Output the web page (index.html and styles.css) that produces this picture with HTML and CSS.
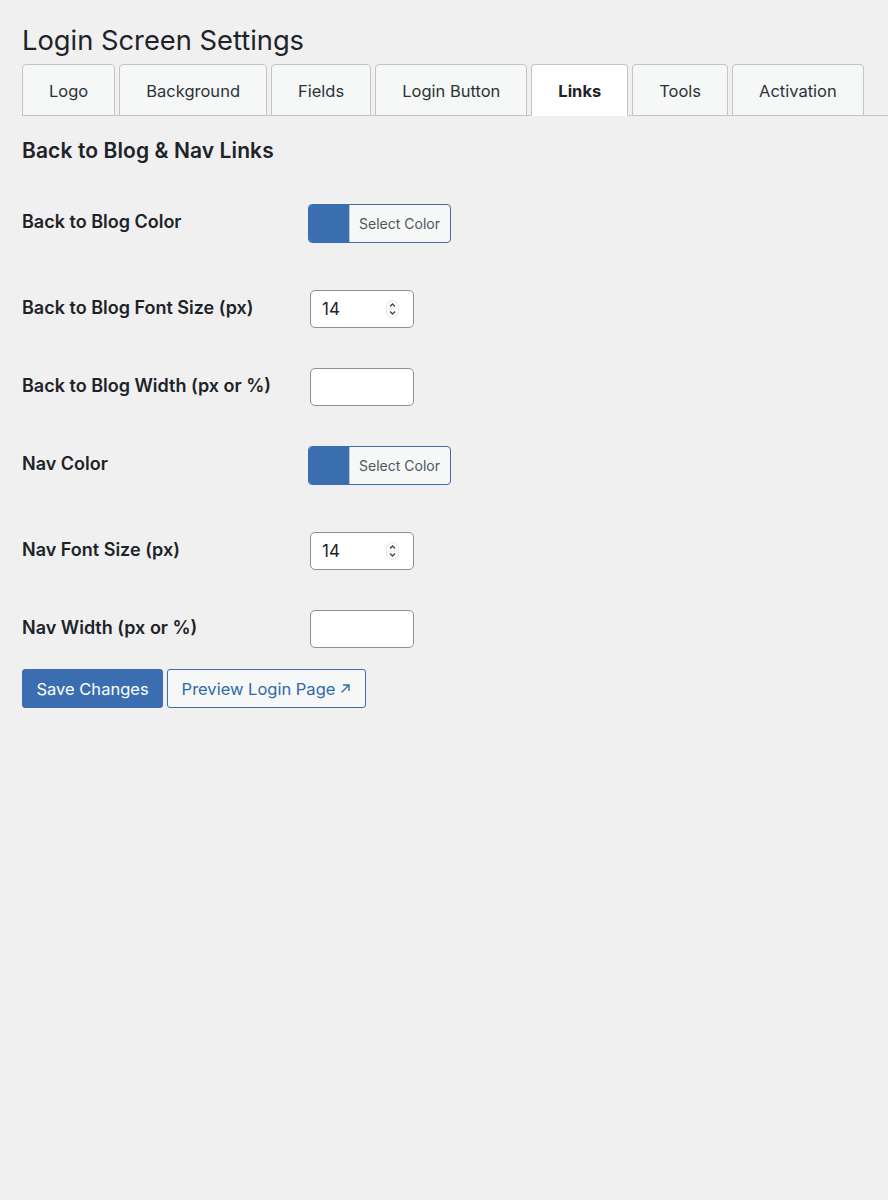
FILE: index.html
```html
<!DOCTYPE html>
<html lang="en">
<head>
<meta charset="utf-8">
<title>Login Screen Settings</title>
<link rel="stylesheet" href="styles.css">
</head>
<body>
<div class="wrap">
  <h1 class="title">Login Screen Settings</h1>
  <nav class="tabs">
    <a class="tab">Logo</a>
    <a class="tab">Background</a>
    <a class="tab">Fields</a>
    <a class="tab">Login Button</a>
    <a class="tab active">Links</a>
    <a class="tab">Tools</a>
    <a class="tab">Activation</a>
  </nav>
  <h2 class="section">Back to Blog &amp; Nav Links</h2>
  <div class="form">
    <div class="row row-color">
      <div class="label">Back to Blog Color</div>
      <button class="color-btn"><span class="swatch"></span><span class="color-text">Select Color</span></button>
    </div>
    <div class="row">
      <div class="label">Back to Blog Font Size (px)</div>
      <div class="input num"><span>14</span>
        <svg class="spin" width="13" height="18" viewBox="0 0 13 18"><rect x="0.5" y="0.5" width="12" height="17" rx="6" fill="#fff" stroke="#e2e3e5"/><line x1="2" y1="9" x2="11" y2="9" stroke="#e6e7e8"/><path d="M4 6.5 L6.5 4 L9 6.5" fill="none" stroke="#3c434a" stroke-width="1.3"/><path d="M4 11.5 L6.5 14 L9 11.5" fill="none" stroke="#3c434a" stroke-width="1.3"/></svg>
      </div>
    </div>
    <div class="row">
      <div class="label">Back to Blog Width (px or %)</div>
      <div class="input"></div>
    </div>
    <div class="row row-color">
      <div class="label">Nav Color</div>
      <button class="color-btn"><span class="swatch"></span><span class="color-text">Select Color</span></button>
    </div>
    <div class="row">
      <div class="label">Nav Font Size (px)</div>
      <div class="input num"><span>14</span>
        <svg class="spin" width="13" height="18" viewBox="0 0 13 18"><rect x="0.5" y="0.5" width="12" height="17" rx="6" fill="#fff" stroke="#e2e3e5"/><line x1="2" y1="9" x2="11" y2="9" stroke="#e6e7e8"/><path d="M4 6.5 L6.5 4 L9 6.5" fill="none" stroke="#3c434a" stroke-width="1.3"/><path d="M4 11.5 L6.5 14 L9 11.5" fill="none" stroke="#3c434a" stroke-width="1.3"/></svg>
      </div>
    </div>
    <div class="row">
      <div class="label">Nav Width (px or %)</div>
      <div class="input"></div>
    </div>
  </div>
  <div class="actions">
    <button class="btn primary">Save Changes</button>
    <button class="btn secondary">Preview Login Page<svg class="ext" width="11" height="11" viewBox="0 0 11 11"><path d="M1.5 9.5 L9 2 M3 2 H9 V8" fill="none" stroke="#2f6aa9" stroke-width="1.4"/></svg></button>
  </div>
</div>
</body>
</html>
```
FILE: styles.css
```css
html, body {
  margin: 0;
  padding: 0;
  background: #f0f0f1;
}
body {
  font-family: Inter, "Noto Sans", "Liberation Sans", sans-serif;
  color: #1d2327;
  font-size: 17px;
}
.wrap {
  padding: 0 0 0 22px;
}
.title {
  margin: 0;
  padding-top: 23px;
  font-size: 27.3px;
  font-weight: 400;
  line-height: 36px;
  height: 41px;
}
.tabs {
  display: flex;
  gap: 4px;
  border-bottom: 1px solid #c3c4c7;
  height: 51px;
  align-items: flex-end;
}
.tab {
  box-sizing: border-box;
  height: 52px;
  margin-bottom: -1px;
  padding: 2px 26px 0;
  display: flex;
  align-items: center;
  background: #f6f7f7;
  border: 1px solid #c3c4c7;
  border-radius: 4px 4px 0 0;
  color: #2c3338;
  font-size: 16.5px;
  line-height: 1;
}
.tab.active {
  background: #fff;
  border-bottom-color: #fff;
  font-weight: 700;
  color: #1d2327;
}
.section {
  margin: 0;
  padding-top: 21px;
  font-size: 21px;
  font-weight: 600;
  line-height: 28px;
  height: 28px;
  letter-spacing: 0.1px;
}
.form {
  padding-top: 39px;
  display: flex;
  flex-direction: column;
  gap: 40px;
}
.row {
  display: grid;
  grid-template-columns: 286px auto;
  align-items: start;
  justify-items: start;
}
.row-color {
  padding-bottom: 7px;
}
.label {
  font-weight: 600;
  font-size: 18px;
  line-height: 36px;
}
.color-btn {
  box-sizing: border-box;
  display: flex;
  height: 39px;
  width: 143px;
  padding: 0;
  border: 1px solid #3a6eb0;
  border-radius: 4px;
  overflow: hidden;
  background: #f6f7f7;
  font-family: inherit;
}
.swatch {
  width: 40px;
  height: 100%;
  background: #3a6eb0;
  border-right: 1px solid #c3c4c7;
}
.color-text {
  flex: 1;
  align-self: center;
  color: #50575e;
  font-size: 14px;
  text-align: center;
  padding-right: 1px;
}
.input {
  box-sizing: border-box;
  margin-left: 2px;
  width: 104px;
  height: 38px;
  background: #fff;
  border: 1px solid #8c8f94;
  border-radius: 5px;
}
.num {
  display: flex;
  align-items: center;
  justify-content: space-between;
  padding: 0 14px 0 11px;
  font-size: 17px;
  color: #1d2327;
}
.spin {
  display: block;
}
.actions {
  display: flex;
  gap: 4px;
  padding-top: 21px;
}
.btn {
  box-sizing: border-box;
  height: 39px;
  border-radius: 3px;
  font-family: inherit;
  font-size: 16.5px;
  padding: 0 13.5px;
  display: flex;
  align-items: center;
  gap: 5px;
  white-space: nowrap;
}
.primary {
  background: #3a6eb0;
  border: 1px solid #3a6eb0;
  color: #fff;
}
.secondary {
  background: #f6f7f7;
  border: 1px solid #3a6eb0;
  color: #2f6aa9;
}
```
